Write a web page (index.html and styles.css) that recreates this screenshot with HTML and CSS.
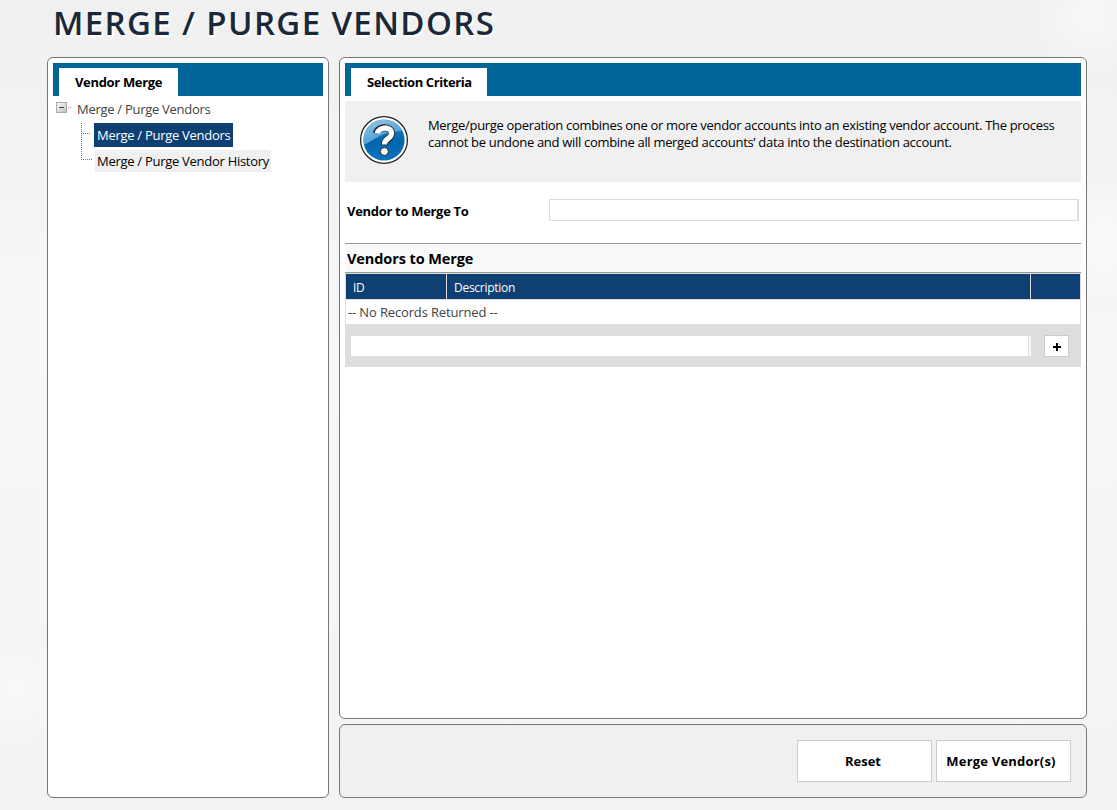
FILE: index.html
```html
<!DOCTYPE html>
<html lang="en">
<head>
<meta charset="utf-8">
<title>Merge / Purge Vendors</title>
<link rel="stylesheet" href="styles.css">
</head>
<body>
<h1 class="title"><span>MERGE / PURGE VENDORS</span></h1>
<main class="layout">
  <aside class="panel side">
    <div class="tabbar"><span class="tab tab-side">Vendor Merge</span></div>
    <div class="tree">
      <div class="root">
        <svg class="toggle" width="16" height="12" viewBox="0 0 16 12">
          <defs><linearGradient id="box" x1="0" y1="0" x2="1" y2="1"><stop offset="0" stop-color="#fff"/><stop offset="1" stop-color="#b9b9b9"/></linearGradient></defs>
          <rect x=".5" y=".5" width="10" height="10" fill="url(#box)" stroke="#aaa"/>
          <path d="M3 5.5h5" stroke="#444"/><path d="M12 5.5h1M14 5.5h1" stroke="#999"/>
        </svg>
        <span class="t-root">Merge / Purge Vendors</span>
      </div>
      <div class="children">
        <svg class="branch" width="13" height="39" viewBox="0 0 13 39" fill="none" stroke="#777" stroke-dasharray="1 1"><path d="M.5 0V37M0 10.5H10M0 36.5H11"/></svg>
        <div class="items">
          <span class="item active">Merge / Purge Vendors</span>
          <span class="item history">Merge / Purge Vendor History</span>
        </div>
      </div>
    </div>
  </aside>
  <div class="right">
    <section class="panel main">
      <div class="tabbar"><span class="tab tab-main">Selection Criteria</span></div>
      <div class="info">
        <svg class="help" width="50" height="50" viewBox="0 0 50 50">
          <defs>
            <linearGradient id="blue" x1="0" y1="0" x2="0" y2="1"><stop offset="0" stop-color="#2384c6"/><stop offset=".55" stop-color="#0065ae"/><stop offset="1" stop-color="#0875bd"/></linearGradient>
            <linearGradient id="gloss" x1="0" y1="0" x2=".7" y2="1"><stop offset="0" stop-color="#b9dff4"/><stop offset="1" stop-color="#3f99d3"/></linearGradient>
          </defs>
          <circle cx="25" cy="25" r="23.4" fill="#fff" stroke="#222" stroke-width="1.3"/>
          <circle cx="25" cy="25" r="20.6" fill="url(#blue)"/>
          <path d="M5 29.5A20.6 20.6 0 0 1 43.5 16C34 16.500 25 18.500 18 22.500C12 26 8 29 5 29.500Z" fill="url(#gloss)" opacity=".8"/>
          <path d="M17.500 18.500C19 11 32.500 11 32.500 18.200C32.500 24 25.300 23.500 25.300 30.300" fill="none" stroke="#222" stroke-width="7"/>
          <circle cx="25.400" cy="36.500" r="4" fill="#fff" stroke="#222" stroke-width="1"/>
          <path d="M18.200 18.500C19.700 11.500 32.500 11 32.500 18.200C32.500 24 25.300 23.500 25.300 29.600" fill="none" stroke="#fff" stroke-width="5.300"/>
        </svg>
        <p class="copy"><span class="l1">Merge/purge operation combines one or more vendor accounts into an existing vendor account. The process</span><br><span class="l2">cannot be undone and will combine all merged accounts’ data into the destination account.</span></p>
      </div>
      <div class="field"><label class="t-field" for="to">Vendor to Merge To</label><input id="to" class="to"></div>
      <h2 class="section"><span>Vendors to Merge</span></h2>
      <div class="grid">
        <div class="head"><span class="t-id">ID</span><span class="t-desc">Description</span><span></span></div>
        <div class="empty"><span>-- No Records Returned --</span></div>
      </div>
      <div class="add"><input class="add-input" aria-label="Vendor"><button class="plus" aria-label="Add"><svg width="8" height="8" viewBox="0 0 8 8"><path d="M0 4h8M4 0v8" stroke="#000" stroke-width="2" shape-rendering="crispEdges"/></svg></button></div>
    </section>
    <footer class="panel actions"><button class="btn t-reset">Reset</button><button class="btn t-merge">Merge Vendor(s)</button></footer>
  </div>
</main>
</body>
</html>
```

FILE: styles.css
```css
* { box-sizing: border-box; }
body {
  margin: 0; height: 810px; overflow: hidden;
  font: 13px/18px "Open Sans", "Noto Sans", sans-serif; color: #000;
  background:
    radial-gradient(circle at 1090px 15px, rgba(250,250,250,.8), transparent 60px),
    radial-gradient(circle at 1105px 240px, rgba(252,252,252,.8), transparent 60px),
    radial-gradient(circle at 15px 690px, rgba(250,250,250,.8), transparent 55px),
    radial-gradient(ellipse at 10px 310px, #f8f8f8, transparent 180px),
    linear-gradient(#f0f0f0, #f7f7f7 45%, #f3f3f3);
}
.title { margin: 0; height: 57px; padding: 1px 0 0 53px; font: 600 33px/44px "Open Sans", sans-serif; letter-spacing: 1.38px; color: #1a2939; text-shadow: 2px 2px 1px #fff; white-space: nowrap; }
.layout { display: flex; gap: 10px; padding-left: 47px; }
.panel { border: 1px solid #777; border-radius: 6px; background: #fff; padding: 5px; }
.side { width: 282px; height: 741px; }
.right { display: flex; flex-direction: column; gap: 5px; width: 748px; }
.main { height: 662px; }
.tabbar { display: flex; height: 33px; padding: 5px 0 0 6px; background: #069; }
.tab { width: 119px; background: #fff; font-weight: 700; line-height: 29px; padding-left: 16px; white-space: nowrap; letter-spacing: -.33px; }
.tab-main { width: 136px; letter-spacing: -.4px; }
.tree { padding: 5px 0 0 3px; white-space: nowrap; letter-spacing: -.28px; }
.root { display: flex; height: 20px; line-height: 17px; color: #444; }
.toggle { flex: none; margin: 1px 5px 0 0; }
.children { display: flex; padding: 2px 0 0 25px; }
.branch { flex: none; }
.items { display: flex; flex-direction: column; align-items: flex-start; gap: 3px; }
.item { height: 24px; padding-left: 3px; line-height: 24px; width: 139px; }
.active { background: #0e4073; color: #fff; }
.history { width: 176px; height: 22px; line-height: 22px; margin-left: 1px; padding-left: 2px; background: #f0f0f0; }
.info { display: flex; height: 81px; margin-top: 5px; background: #f0f0f0; padding: 14px 0 0 14px; }
.help { flex: none; }
.copy { margin: 2px 0 0 19px; line-height: 17px; white-space: nowrap; letter-spacing: -.32px; }
.l2 { letter-spacing: -.31px; }
.field { display: flex; height: 61px; padding: 17px 2px 0; font-weight: 700; letter-spacing: -.31px; }
.field label { width: 202px; line-height: 24px; white-space: nowrap; }
input { border: 1px solid #ddd; padding: 0; background: #fff; }
.to { width: 530px; height: 22px; border-right-width: 2px; }
.section { margin: 0; height: 30px; border: solid #999; border-width: 1px 0; background: #f9f9f9; font-size: 14.500px; line-height: 29px; padding-left: 2px; letter-spacing: -.1px; }
.grid { border: 1px solid #ddd; border-bottom: 0; }
.head { display: grid; grid-template: 25px / 100px 583px 1fr; column-gap: 1px; height: 25px; line-height: 27px; font-size: 12px; letter-spacing: -.28px; background: #ddd; color: #fff; }
.head span { background: #0e4073; padding-left: 7px; }
.empty { height: 25px; border-top: 1px solid #ddd; padding-left: 2px; line-height: 25px; letter-spacing: -.14px; color: #444; }
.add { display: flex; height: 43px; padding: 11px 12px 0 5px; background: #ddd; }
.add-input { width: 681px; height: 22px; border-right: 2px solid #f9f9f9; box-shadow: inset -1px 0 #ddd; margin-right: 13px; }
.plus { display: grid; place-items: center; width: 25px; height: 22px; border: 1px solid #ccc; background: #fff; padding: 2px 0 0; }
.actions { display: flex; justify-content: flex-end; gap: 4px; height: 74px; padding: 15px; background: #f0f0f0; }
.btn { width: 135px; height: 42px; border: 1px solid #ccc; background: #fff; padding: 0 3px 0 0; color: #000; font: 700 13px/18px "Open Sans", sans-serif; white-space: nowrap; }
.t-merge { padding-right: 5px; letter-spacing: .2px; }
```
